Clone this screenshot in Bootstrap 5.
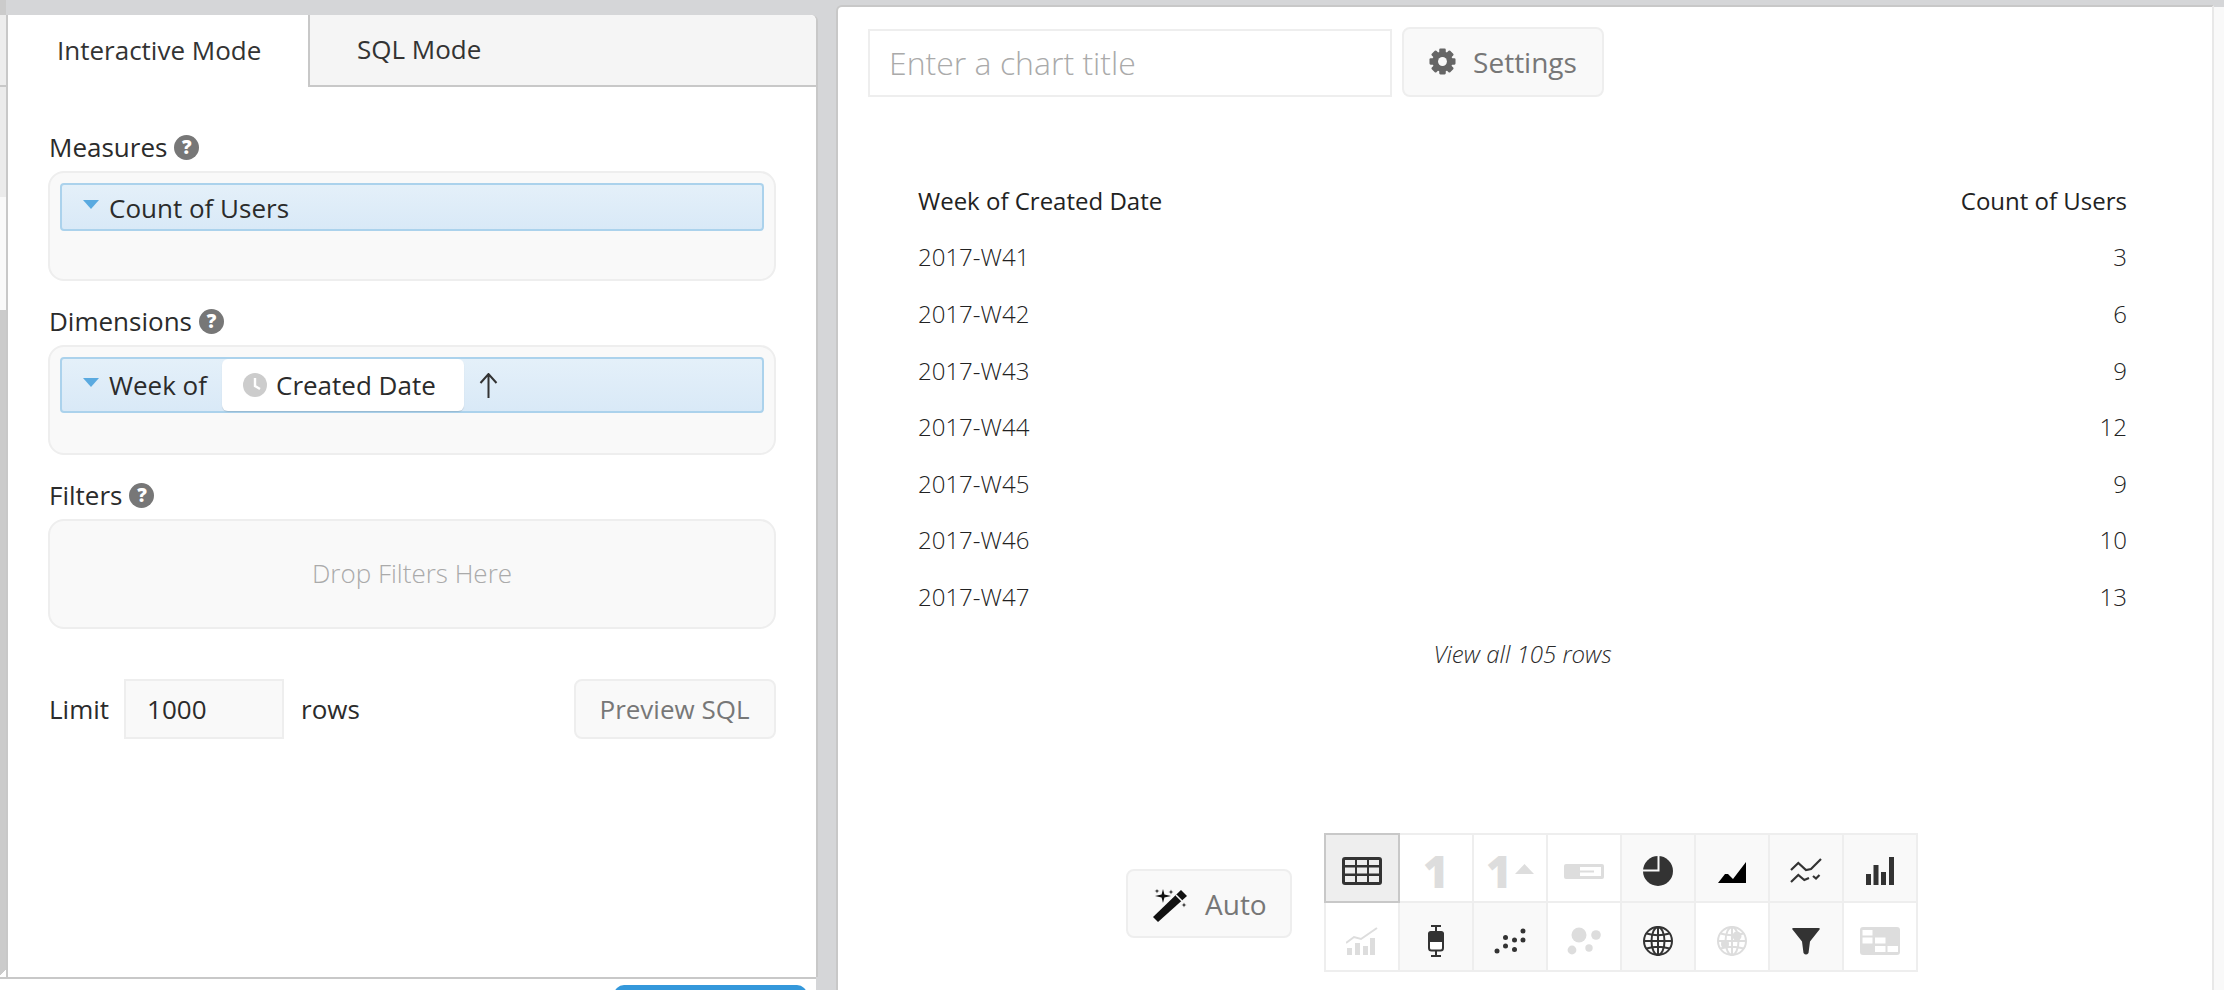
<!DOCTYPE html>
<html lang="en">
<head>
<meta charset="utf-8">
<title>Chart editor</title>
<link href="https://cdn.jsdelivr.net/npm/bootstrap@5.3.0/dist/css/bootstrap.min.css" rel="stylesheet">
<style>
html,body{height:990px;overflow:hidden}
body{background:#d5d6d8;font-family:"Open Sans",sans-serif;font-size:26px;color:#2b2b2b;line-height:1.4}
.page-wrap{height:990px}
.left-col{width:818px;flex:none}
.sliver{width:6px;flex:none;background:#cbcbcb}
.sliver-a{height:70px;background:#ededed;margin-top:15px}
.sliver-line{height:2px;background:#c8c8c8}
.sliver-b{height:110px;background:#ebebeb}
.sliver-c{height:113px;background:#f9f9f9}
.sliver-end{margin-top:auto;height:8px;background:linear-gradient(135deg,#cbcbcb 50%,#fff 50%)}
.editor-panel{margin-top:15px;width:812px;background:#fff;border-left:2px solid #c8c8c8;border-right:2px solid #c8c8c8;border-top-right-radius:6px}
.tab-bar{height:72px;background:#f5f5f5;border-top-right-radius:6px}
.tab-item{height:72px;display:flex;align-items:center;font-size:26px;color:#333;padding-bottom:2px}
.tab-on{width:302px;background:#fff;padding-left:49px;border-right:2px solid #c8c8c8}
.tab-off{flex:1;padding-left:47px;border-bottom:2px solid #c8c8c8}
.panel-body{padding:43px 40px 0}
.field-label{height:36px;margin-bottom:5px;line-height:36px;display:flex;align-items:center;gap:7px;padding:0 0 2px 1px}
.help-dot{width:25px;height:25px;border-radius:50%;background:#777;color:#fff;font-size:19px;font-weight:800;line-height:25px;text-align:center}
.drop-box{height:110px;border:2px solid #eee;border-radius:16px;background:#f9f9f9;padding:10px;margin-bottom:23px}
.pill-field{border:2px solid #abd2ec;border-radius:4px;background:linear-gradient(#e4f0f9,#d9e9f7);display:flex;align-items:center;height:48px;padding-left:21px}
.pill-text{padding-top:2px}
.pill-tall{height:56px}
.pill-caret{width:16px;height:9px;margin-right:10px;margin-top:-6px;flex:none}
.pill-inner{height:52px;background:#fff;border-radius:6px;box-shadow:0 1px 1px rgba(0,0,0,.12);display:flex;align-items:center;padding:0 28px 0 21px;margin:0 15px;gap:9px}
.drop-hint{height:106px;display:flex;align-items:center;justify-content:center;color:#aaa;font-weight:300;margin:-10px;padding-bottom:2px}
.limit-row{margin-top:50px;height:60px}
.limit-label{padding-left:1px}
.limit-input{width:160px;height:60px;border:2px solid #eee;border-radius:0;background:#f9f9f9;padding:0 0 0 21px;font-size:26px;color:#2b2b2b;margin:0 17px 0 15px}
.soft-btn{background:#f9f9f9;border:2px solid #eee;border-radius:8px;color:#777;font-size:26px;display:flex;align-items:center;justify-content:center;padding:0}
.preview-btn{width:202px;height:60px;padding-right:1px}
.foot-bar{height:13px;background:#fff;border-top:2px solid #c8c8c8;overflow:hidden;padding:6px 9px 0 0;width:816px}
.run-btn{width:193px;height:30px;background:#3498db;border-radius:10px}
.chart-panel{margin-left:18px;width:1378px;margin-top:5px;background:#fff;border-top:2px solid #c8c8c8;border-left:2px solid #c8c8c8;border-right:2px solid #e8e8e8;border-top-left-radius:6px;height:985px}
.trail{flex:1;margin-top:7px;background:#f9f9f9}
.title-row{padding:20px 0 0 30px;gap:10px}
.title-input{width:524px;height:68px;border:2px solid #eee;border-radius:0;padding:0 19px 2px;font-size:32px;font-weight:300;color:#333}
.title-input::placeholder{color:#aaa}
.settings-btn{width:202px;height:70px;gap:17px;font-size:28px;padding-bottom:1px}
.data-wrap{padding:76px 85px 0 80px}
.data-table{margin:0;--bs-table-bg:transparent;font-size:24px;font-weight:300;color:#222}
.data-table th,.data-table td{padding:0;height:56.6px;vertical-align:middle;font-weight:300;color:#222;line-height:1.2}
.data-table thead th{font-weight:400}
.view-all{text-align:center;font-style:italic;font-weight:300;font-size:24px;height:56px;line-height:56px}
.chart-row{margin-top:auto;padding:0 0 18px 288px;align-items:center;gap:32px}
.auto-btn{width:166px;height:69px;gap:17px;font-size:28px;justify-content:flex-start;padding-left:25px;margin-top:2px}
.wand-icon{margin-top:4px;flex:none}
.type-grid{display:grid;grid-template-columns:repeat(8,74px);grid-template-rows:68px 69px;border-top:2px solid #eee;border-left:2px solid #eee}
.type-cell{border-right:2px solid #eee;border-bottom:2px solid #eee;display:flex;align-items:center;justify-content:center;padding-top:6px;background:#fff}
.type-grid .row-two{padding-top:9px}
.type-on{background:#f9f9f9}
.type-sel{background:#eee;border:2px solid #c8c8c8;margin:-2px 0 0 -2px}
.num-glyph{font-size:44px;font-weight:800;color:#ddd;line-height:1}
.up-tri{margin-bottom:4px;margin-left:-1px}
.area-icon{margin-top:3px}
</style>
</head>
<body>
<div class="page-wrap d-flex">
  <div class="left-col d-flex flex-column">
    <div class="d-flex flex-grow-1">
      <div class="sliver d-flex flex-column">
        <div class="sliver-a"></div><div class="sliver-line"></div><div class="sliver-b"></div><div class="sliver-c"></div>
        <div class="sliver-end"></div>
      </div>
      <div class="editor-panel">
        <div class="tab-bar d-flex">
          <div class="tab-item tab-on">Interactive Mode</div>
          <div class="tab-item tab-off">SQL Mode</div>
        </div>
        <div class="panel-body">
          <div class="field-label">Measures <span class="help-dot">?</span></div>
          <div class="drop-box">
            <div class="pill-field">
              <svg class="pill-caret" viewBox="0 0 16 9"><path d="M0 0H16L8 9Z" fill="#5aaae0"/></svg>
              <span class="pill-text">Count of Users</span>
            </div>
          </div>
          <div class="field-label">Dimensions <span class="help-dot">?</span></div>
          <div class="drop-box">
            <div class="pill-field pill-tall">
              <svg class="pill-caret" viewBox="0 0 16 9"><path d="M0 0H16L8 9Z" fill="#5aaae0"/></svg>
              <span>Week of</span>
              <div class="pill-inner">
                <svg width="24" height="24" viewBox="0 0 24 24"><circle cx="12" cy="12" r="12" fill="#ccc"/><path d="M12 5v8l5 3" fill="none" stroke="#fff" stroke-width="2.4"/></svg>
                <span>Created Date</span>
              </div>
              <svg width="19" height="25" viewBox="0 0 19 25"><path d="M9.500 25V1M1.500 10L9.500 1l8 9" fill="none" stroke="#333" stroke-width="2"/></svg>
            </div>
          </div>
          <div class="field-label">Filters <span class="help-dot">?</span></div>
          <div class="drop-box mb-0">
            <div class="drop-hint">Drop Filters Here</div>
          </div>
          <div class="limit-row d-flex align-items-center">
            <span class="limit-label">Limit</span>
            <input class="form-control limit-input" value="1000" aria-label="Limit">
            <span class="me-auto">rows</span>
            <button class="btn soft-btn preview-btn" type="button">Preview SQL</button>
          </div>
        </div>
      </div>
    </div>
    <div class="foot-bar d-flex justify-content-end"><div class="run-btn"></div></div>
  </div>

  <div class="chart-panel d-flex flex-column">
    <div class="title-row d-flex align-items-end">
      <input class="form-control title-input" placeholder="Enter a chart title" aria-label="Chart title">
      <button class="btn soft-btn settings-btn" type="button">
        <svg width="27" height="27" viewBox="-14 -14 28 28"><g fill="#666"><circle r="10.500"/><rect x="-3.400" y="-13.500" width="6.800" height="27" rx="1.200"/><rect x="-3.400" y="-13.500" width="6.800" height="27" rx="1.200" transform="rotate(45)"/><rect x="-3.400" y="-13.500" width="6.800" height="27" rx="1.200" transform="rotate(90)"/><rect x="-3.400" y="-13.500" width="6.800" height="27" rx="1.200" transform="rotate(135)"/></g><circle r="4.600" fill="#f9f9f9"/></svg>
        <span>Settings</span>
      </button>
    </div>
    <div class="data-wrap">
      <table class="table table-borderless data-table">
        <thead><tr><th>Week of Created Date</th><th class="text-end">Count of Users</th></tr></thead>
        <tbody>
          <tr><td>2017-W41</td><td class="text-end">3</td></tr>
          <tr><td>2017-W42</td><td class="text-end">6</td></tr>
          <tr><td>2017-W43</td><td class="text-end">9</td></tr>
          <tr><td>2017-W44</td><td class="text-end">12</td></tr>
          <tr><td>2017-W45</td><td class="text-end">9</td></tr>
          <tr><td>2017-W46</td><td class="text-end">10</td></tr>
          <tr><td>2017-W47</td><td class="text-end">13</td></tr>
        </tbody>
      </table>
      <div class="view-all">View all 105 rows</div>
    </div>
    <div class="chart-row d-flex">
      <button class="btn soft-btn auto-btn" type="button">
        <svg class="wand-icon" width="35" height="34" viewBox="0 0 35 34">
          <path d="M0 28L5 33 34 7 28 1Z" fill="#111"/>
          <path d="M23 6l6 6" stroke="#f9f9f9" stroke-width="1.500"/>
          <path d="M10 0l1.400 5.600L18 7l-6.600 1.400L10 14 8.600 8.400 2 7l6.600-1.400Z" fill="#111"/>
          <path d="M4 0l.6 1.400L6.500 2l-1.900.6L4 4.500 3.400 2.600 1.500 2l1.900-.6Z" fill="#111"/>
          <path d="M18 .5l.6 1.900 1.900.6-1.900.6-.6 1.900-.6-1.900-1.900-.6 1.900-.6Z" fill="#111"/>
          <path d="M31 13.500l.6 1.900 1.900.6-1.900.6-.6 1.900-.6-1.900-1.900-.6 1.900-.6Z" fill="#111"/>
        </svg>
        <span>Auto</span>
      </button>
      <div class="type-grid">
        <div class="type-cell type-sel">
          <svg width="40" height="28" viewBox="0 0 40 28"><rect width="40" height="28" rx="3" fill="#333"/><g fill="#eee"><rect x="3" y="3" width="10" height="5"/><rect x="15" y="3" width="10" height="5"/><rect x="27" y="3" width="10" height="5"/><rect x="3" y="10.500" width="10" height="6"/><rect x="15" y="10.500" width="10" height="6"/><rect x="27" y="10.500" width="10" height="6"/><rect x="3" y="19" width="10" height="6"/><rect x="15" y="19" width="10" height="6"/><rect x="27" y="19" width="10" height="6"/></g></svg>
        </div>
        <div class="type-cell"><span class="num-glyph">1</span></div>
        <div class="type-cell gap-1"><span class="num-glyph">1</span><svg class="up-tri" width="19" height="10" viewBox="0 0 19 10"><path d="M9.500 0L19 10H0Z" fill="#ddd"/></svg></div>
        <div class="type-cell">
          <svg width="40" height="15" viewBox="0 0 40 15"><rect width="40" height="15" rx="2" fill="#ddd"/><rect x="16" y="3" width="21" height="9" fill="#fff"/><rect x="16" y="6.500" width="14" height="2" fill="#ddd"/></svg>
        </div>
        <div class="type-cell type-on">
          <svg width="30" height="30" viewBox="0 0 30 30"><circle cx="15" cy="15" r="15" fill="#333"/><path d="M0 14.500H15.500V0" fill="none" stroke="#f9f9f9" stroke-width="2"/></svg>
        </div>
        <div class="type-cell type-on">
          <svg class="area-icon" width="28" height="21" viewBox="0 0 28 21"><path d="M0 21L7 12h3l5 5L28 0V21Z" fill="#000"/></svg>
        </div>
        <div class="type-cell type-on">
          <svg width="32" height="26" viewBox="0 0 32 26"><path d="M1 12L8.300 5 16 12l5-1L31 1M1 24L8.300 17 14.300 22 19 20M23 18l3 2.500 3.500-3.500" fill="none" stroke="#333" stroke-width="2.200"/></svg>
        </div>
        <div class="type-cell type-on">
          <svg width="28" height="28" viewBox="0 0 28 28"><g fill="#333"><rect y="17" width="5" height="11"/><rect x="7.500" y="8" width="5" height="20"/><rect x="15" y="15" width="5" height="13"/><rect x="23" width="5" height="28"/></g></svg>
        </div>

        <div class="type-cell row-two">
          <svg width="32" height="28" viewBox="0 0 32 28"><g fill="#ddd"><rect x="1" y="21" width="5" height="7"/><rect x="9" y="16" width="5" height="12"/><rect x="17" y="19" width="5" height="9"/><rect x="24" y="11" width="5" height="17"/></g><path d="M0 16l8-6 7 2L31 1" fill="none" stroke="#ddd" stroke-width="2"/></svg>
        </div>
        <div class="type-cell type-on row-two">
          <svg width="16" height="32" viewBox="0 0 16 32"><g fill="none" stroke="#333" stroke-width="2"><path d="M3 1h10M8 1v6M8 26v5M3 31h10"/><rect x="1" y="7.500" width="14" height="18" rx="2.500" fill="#fff"/></g><path d="M0 9a3 3 0 0 1 3-3h10a3 3 0 0 1 3 3v8H0Z" fill="#333"/></svg>
        </div>
        <div class="type-cell type-on row-two">
          <svg width="33" height="26" viewBox="0 0 33 26"><g fill="#333"><circle cx="3" cy="23" r="2.500"/><circle cx="11.500" cy="18" r="2.500"/><circle cx="20.500" cy="21.500" r="2.500"/><circle cx="11.500" cy="9.500" r="2.500"/><circle cx="20.500" cy="12" r="2.500"/><circle cx="29" cy="3" r="2.500"/><circle cx="29" cy="12" r="2.500"/></g></svg>
        </div>
        <div class="type-cell row-two">
          <svg width="34" height="28" viewBox="0 0 34 28"><g fill="#ddd"><circle cx="12" cy="8" r="7.500"/><circle cx="29" cy="8" r="4.800"/><circle cx="5" cy="23" r="4.400"/><circle cx="22" cy="21" r="3.700"/></g></svg>
        </div>
        <div class="type-cell type-on row-two">
          <svg width="30" height="30" viewBox="0 0 30 30"><g fill="none" stroke="#333" stroke-width="2"><circle cx="15" cy="15" r="14"/><ellipse cx="15" cy="15" rx="6.500" ry="14"/><path d="M15 1v28M1 15h28M3.500 7.500Q15 11 26.500 7.500M3.500 22.500Q15 19 26.500 22.500"/></g></svg>
        </div>
        <div class="type-cell row-two">
          <svg width="30" height="30" viewBox="0 0 30 30"><g fill="none" stroke="#ddd" stroke-width="2"><circle cx="15" cy="15" r="14"/><ellipse cx="15" cy="15" rx="6.500" ry="14"/><path d="M15 1v28M1 15h28M3.500 7.500Q15 11 26.500 7.500M3.500 22.500Q15 19 26.500 22.500"/></g><g fill="#ddd"><circle cx="20" cy="10" r="4.500"/><circle cx="8" cy="18" r="4"/></g></svg>
        </div>
        <div class="type-cell type-on row-two">
          <svg width="28" height="27" viewBox="0 0 28 27"><path d="M1.500 0H26.500Q28.500 0 27.500 1.500L18 13.500 16.500 25Q14 28 11.500 25L10 13.500.5 1.500Q-.5 0 1.500 0Z" fill="#333"/></svg>
        </div>
        <div class="type-cell row-two">
          <svg width="40" height="28" viewBox="0 0 40 28"><rect width="40" height="28" rx="3" fill="#ddd"/><g fill="#fff"><rect x="2.500" y="3" width="10" height="5.500"/><rect x="2.500" y="10.500" width="10" height="6"/><rect x="15" y="10.500" width="10.500" height="6"/><rect x="15" y="19" width="10.500" height="6"/><rect x="27.500" y="19" width="10.500" height="6"/></g></svg>
        </div>
      </div>
    </div>
  </div>
  <div class="trail"></div>
</div>
<script src="https://cdn.jsdelivr.net/npm/bootstrap@5.3.0/dist/js/bootstrap.bundle.min.js"></script>
</body>
</html>
